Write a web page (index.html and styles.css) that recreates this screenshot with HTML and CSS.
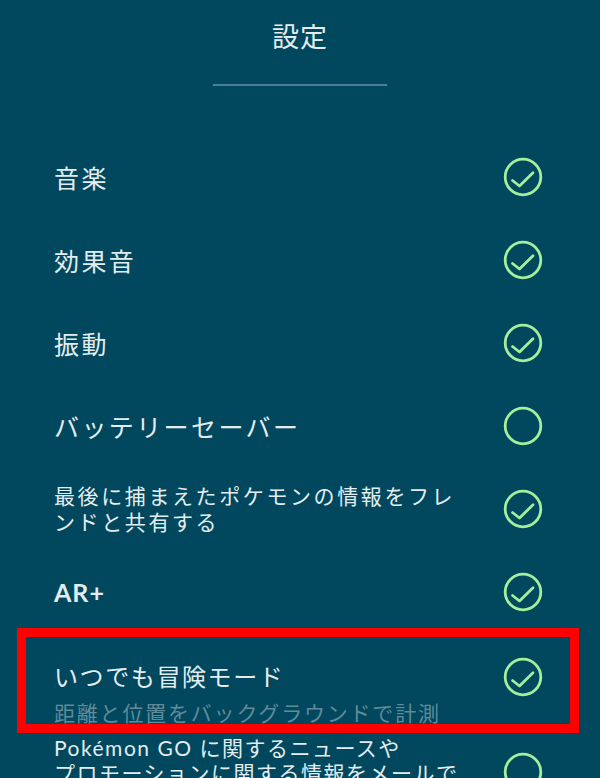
FILE: index.html
```html
<!DOCTYPE html>
<html lang="ja">
<head>
  <meta charset="UTF-8" />
  <meta name="viewport" content="width=device-width, initial-scale=1.0" />
  <title>設定</title>
  <link rel="stylesheet" href="styles.css">
</head>
<body>
  <div class="screen">
    <header class="head">
      <h1 class="title">設定</h1>
      <div class="rule"></div>
    </header>

    <ul class="settings">
      <li class="setting">
        <span class="label">音楽</span>
        <svg class="check" viewBox="0 0 40 40"><circle cx="20" cy="20" r="17.8"/><path d="M9.5 23.5 L16.5 29 L30 15.8"/></svg>
      </li>
      <li class="setting">
        <span class="label">効果音</span>
        <svg class="check" viewBox="0 0 40 40"><circle cx="20" cy="20" r="17.8"/><path d="M9.5 23.5 L16.5 29 L30 15.8"/></svg>
      </li>
      <li class="setting">
        <span class="label">振動</span>
        <svg class="check" viewBox="0 0 40 40"><circle cx="20" cy="20" r="17.8"/><path d="M9.5 23.5 L16.5 29 L30 15.8"/></svg>
      </li>
      <li class="setting">
        <span class="label">バッテリーセーバー</span>
        <svg class="check" viewBox="0 0 40 40"><circle cx="20" cy="20" r="17.8"/></svg>
      </li>
      <li class="setting">
        <span class="label small">最後に捕まえたポケモンの情報をフレ<br>ンドと共有する</span>
        <svg class="check" viewBox="0 0 40 40"><circle cx="20" cy="20" r="17.8"/><path d="M9.5 23.5 L16.5 29 L30 15.8"/></svg>
      </li>
      <li class="setting">
        <span class="label bold">AR+</span>
        <svg class="check" viewBox="0 0 40 40"><circle cx="20" cy="20" r="17.8"/><path d="M9.5 23.5 L16.5 29 L30 15.8"/></svg>
      </li>
      <li class="setting adventure">
        <div class="text">
          <span class="label">いつでも冒険モード</span>
          <span class="sub">距離と位置をバックグラウンドで計測</span>
        </div>
        <svg class="check" viewBox="0 0 40 40"><circle cx="20" cy="20" r="17.8"/><path d="M9.5 23.5 L16.5 29 L30 15.8"/></svg>
        <div class="mark"></div>
      </li>
      <li class="setting news">
        <span class="label small">Pokémon GO に関するニュースや<br>プロモーションに関する情報をメールで<br>受け取る</span>
        <svg class="check" viewBox="0 0 40 40"><circle cx="20" cy="20" r="17.8"/></svg>
      </li>
    </ul>
  </div>
</body>
</html>
```

FILE: styles.css
```css
body {
  margin: 0;
  background: #01475d;
  color: #e3edef;
  font-family: Lato, "Noto Sans CJK JP", sans-serif;
  height: 778px;
  overflow: hidden;
}
.head {
  text-align: center;
  padding-top: 17px;
}
.title {
  margin: 0;
  font-size: 27px;
  font-weight: 400;
  line-height: 40px;
  letter-spacing: 1px;
}
.rule {
  width: 174px;
  height: 2px;
  background: #4a8195;
  margin: 27px auto 0;
}
.settings {
  list-style: none;
  margin: 49.5px 0 0;
  padding: 0;
}
.setting {
  display: flex;
  align-items: center;
  justify-content: space-between;
  height: 83px;
  padding: 0 57px 0 54px;
  box-sizing: border-box;
}
.label {
  font-size: 25px;
  letter-spacing: 2.4px;
}
.label.small {
  font-size: 21px;
  line-height: 26px;
  letter-spacing: 2.6px;
}
.label.bold {
  font-weight: 700;
  letter-spacing: 1px;
}
.check {
  width: 40px;
  height: 40px;
  flex: none;
  fill: none;
  stroke: #a3ef9c;
  stroke-width: 2.8;
  stroke-linecap: round;
  stroke-linejoin: round;
}
.adventure {
  position: relative;
  height: auto;
  align-items: flex-start;
  padding-top: 26px;
}
.text {
  display: flex;
  flex-direction: column;
}
.adventure .label {
  font-size: 24px;
  line-height: 34px;
  letter-spacing: 1.6px;
}
.adventure .check {
  margin-top: -3px;
}
.sub {
  font-size: 21px;
  line-height: 30px;
  margin-top: 4px;
  letter-spacing: 1.8px;
  color: #5f8b9a;
}
.mark {
  position: absolute;
  top: -6px;
  left: 17px;
  right: 21px;
  bottom: -5px;
  border: 9px solid #ff0000;
}
.news {
  height: auto;
  padding-top: 7px;
}
.news .label {
  line-height: 25px;
  letter-spacing: 1.5px;
}
```
